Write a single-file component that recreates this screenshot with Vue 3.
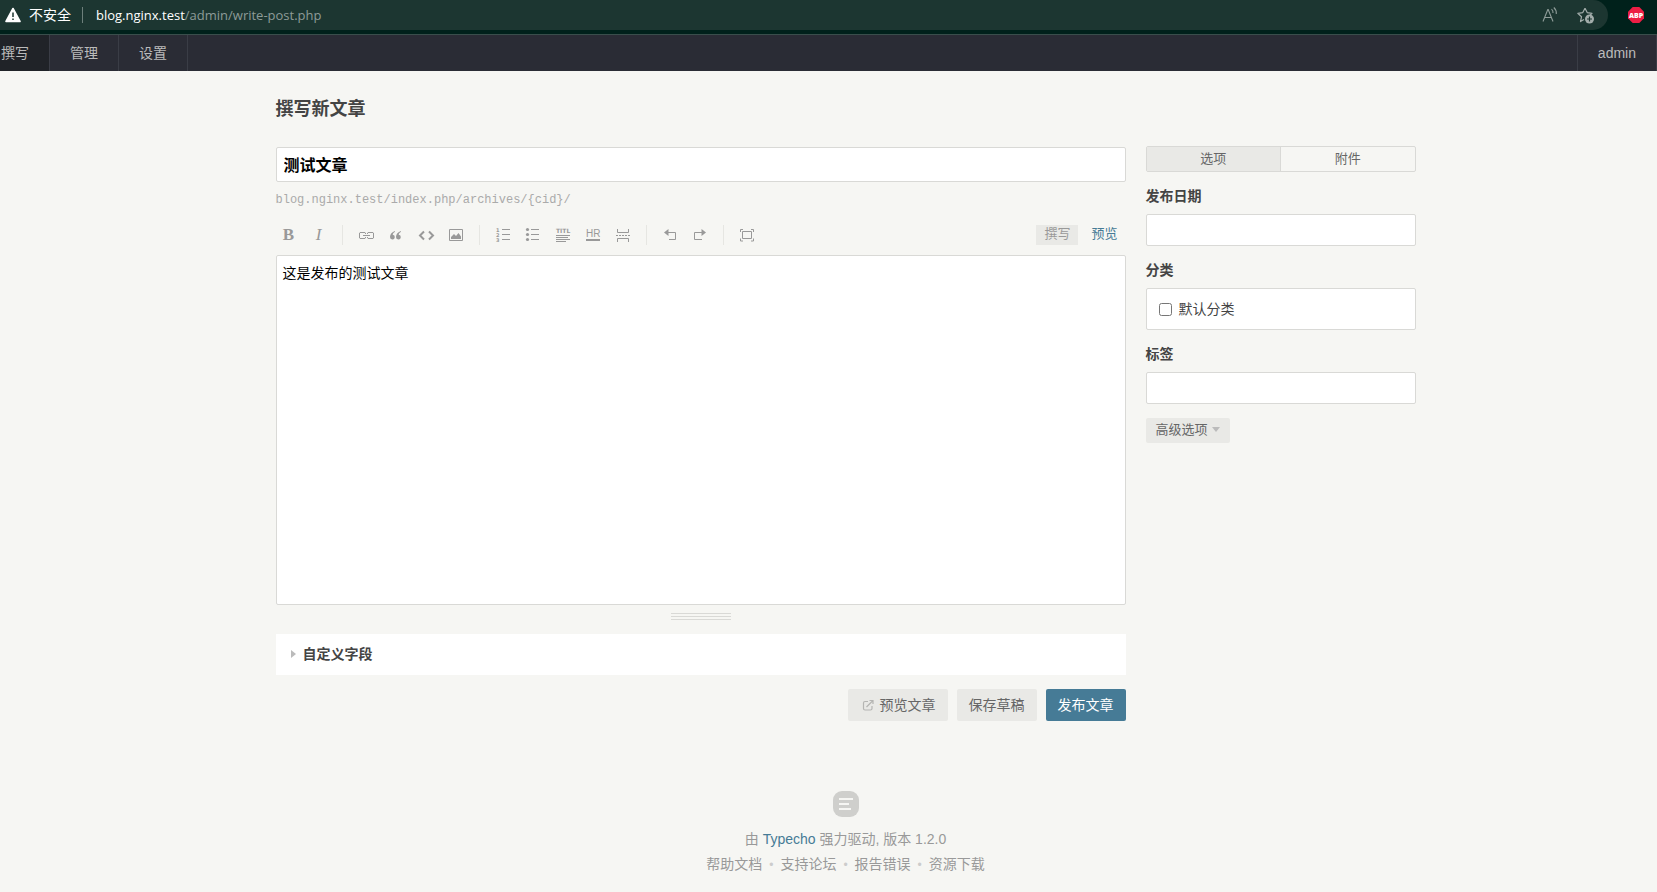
<script setup>
import { ref } from 'vue'

const title = ref('测试文章')
const body = ref('这是发布的测试文章')
const date = ref('')
const tags = ref('')
const checked = ref(false)
const menu = ['撰写', '管理', '设置']
const links = ['帮助文档', '支持论坛', '报告错误', '资源下载']
</script>

<template>
  <div class="page">
    <div class="browser">
      <div class="address">
        <svg class="warn" width="16" height="16" viewBox="0 0 16 16" aria-hidden="true">
          <path d="M8 1.5 15 14.5H1Z" fill="#fff" stroke="#fff" stroke-width="1.6" stroke-linejoin="round" />
          <path d="M8 5.5v4.5M8 11.5v1.6" stroke="#1c3631" stroke-width="1.5" />
        </svg>
        <span class="insecure">不安全</span>
        <span class="bar-line"></span>
        <span class="url">blog.nginx.test<span class="path">/admin/write-post.php</span></span>
        <button class="tool" aria-label="朗读">
          <svg width="18" height="18" viewBox="0 0 18 18" fill="none" stroke="#8f9c99" stroke-width="1.1">
            <path d="M2 15.5 6.8 3.5h.4l4.8 12M3.8 11.5h6.4M10.5 3.2c1.2 1 1.7 2.3 1.5 3.8M12.8 1.5c2 1.8 2.8 3.8 2.5 6.5" />
          </svg>
        </button>
        <button class="tool" aria-label="收藏">
          <svg width="20" height="18" viewBox="0 0 20 18" fill="none">
            <path d="M9 2.2 11.2 6.6 16 7.3 14 9.2M8 13.5 4.5 15.6 5.5 10.8 1.8 7.3 6.8 6.6 9 2.2" stroke="#a3adab" stroke-width="1.2" stroke-linejoin="round" />
            <circle cx="13.5" cy="13" r="4.5" fill="#a3adab" />
            <path d="M13.5 10.5v5M11 13h5" stroke="#1c3631" stroke-width="1.2" />
          </svg>
        </button>
      </div>
      <button class="abp" aria-label="Adblock Plus">
        <svg width="16" height="16" viewBox="0 0 16 16">
          <path d="M4.7 0h6.600L16 4.700v6.600L11.300 16H4.700L0 11.300V4.700Z" fill="#ed1e45" />
          <text x="8" y="10.6" text-anchor="middle" font-family="Open Sans, sans-serif" font-weight="800" font-size="7" fill="#fff">ABP</text>
        </svg>
      </button>
    </div>

    <nav class="nav">
      <a v-for="(m, i) in menu" :key="m" href="#" :class="{ active: i === 0 }">{{ m }}</a>
      <a href="#" class="user">admin</a>
    </nav>

    <main class="container">
      <h2>撰写新文章</h2>
      <div class="cols">
        <section class="editor">
          <input v-model="title" class="title" type="text" aria-label="标题" />
          <p class="slug">blog.nginx.test/index.php/archives/{cid}/</p>
          <div class="toolbar">
            <button class="serif" aria-label="加粗"><b>B</b></button>
            <button class="serif" aria-label="斜体"><i>I</i></button>
            <span class="sep"></span>
            <button aria-label="链接">
              <svg viewBox="0 0 20 20" fill="none" stroke="#999"><path d="M9.5 9V8l-.5-.5H4l-.5.5v5l.5.5h5l.5-.5v-1M11.500 9V8l.5-.5h5l.5.5v5l-.5.5h-5l-.5-.5v-1M7 10.500h7" /></svg>
            </button>
            <button aria-label="引用">
              <svg viewBox="0 0 20 20" fill="#999"><path d="M9 6C6 7 4 9 4 12a2.4 2.4 0 1 0 2.7-2.3C6.8 8.5 7.6 7.5 9 6.7ZM15 6c-3 1-5 3-5 6a2.4 2.4 0 1 0 2.7-2.3C12.8 8.5 13.6 7.5 15 6.7Z" /></svg>
            </button>
            <button aria-label="代码">
              <svg viewBox="0 0 20 20" fill="none" stroke="#999" stroke-width="2"><path d="M8 6.5 4 10.5l4 4M13 6.5l4 4-4 4" /></svg>
            </button>
            <button aria-label="图片">
              <svg viewBox="0 0 20 20"><path d="M3.5 4.5h13v11h-13z" fill="none" stroke="#999" /><path d="M5 14v-2l3-3 2 2 2.5-3L15 11.5V14Z" fill="#999" /></svg>
            </button>
            <span class="sep"></span>
            <button aria-label="数字列表">
              <svg viewBox="0 0 20 20" fill="#999"><path d="M9 4h8v1H9zM9 9h8v1H9zM9 14h8v1H9z" /><g font-family="DejaVu Sans, sans-serif" font-weight="700" font-size="5"><text x="3" y="7">1</text><text x="3" y="12">2</text><text x="3" y="17">3</text></g></svg>
            </button>
            <button aria-label="普通列表">
              <svg viewBox="0 0 20 20" fill="#999"><path d="M8 4h8v1H8zM8 9h8v1H8zM8 14h8v1H8z" /><circle cx="4.5" cy="4.5" r="1.6" /><circle cx="4.5" cy="9.5" r="1.6" /><circle cx="4.5" cy="14.5" r="1.6" /></svg>
            </button>
            <button aria-label="标题">
              <svg viewBox="0 0 20 20" fill="#999"><text x="3" y="7.500" font-family="DejaVu Sans, sans-serif" font-weight="700" font-size="6">TITL</text><path d="M3 10h14v1H3zM3 12h12v1H3zM3 14h14v1H3zM3 16h10v1H3z" /></svg>
            </button>
            <button aria-label="分割线">
              <svg viewBox="0 0 20 20" fill="#999"><text x="3" y="12" font-family="Liberation Sans, sans-serif" font-size="10">HR</text><path d="M3 14h14v2H3z" /></svg>
            </button>
            <button aria-label="摘要分割线">
              <svg viewBox="0 0 20 20" fill="none" stroke="#999"><path d="M4.5 4v3.5h11V4M4.5 17v-3.5h11V17" /><path d="M3 10.5h14" stroke-dasharray="2 1" /></svg>
            </button>
            <span class="sep"></span>
            <button aria-label="撤销">
              <svg viewBox="0 0 20 20"><path d="M7 7.5h8.5v7H9" fill="none" stroke="#999" /><path d="M4 7.5 8.5 4v7Z" fill="#999" /></svg>
            </button>
            <button aria-label="重做">
              <svg viewBox="0 0 20 20"><path d="M13 7.5H4.5v7h7.5" fill="none" stroke="#999" /><path d="M16 7.5 11.5 4v7Z" fill="#999" /></svg>
            </button>
            <span class="sep"></span>
            <button aria-label="全屏">
              <svg viewBox="0 0 20 20" fill="none" stroke="#999"><path d="M5.5 6.5h9v7h-9zM3.5 7V4.5H6M14 4.5h2.5V7M16.5 13.5V16H14M6 16H3.5v-2.5" /></svg>
            </button>
            <span class="modes"><a href="#" class="on">撰写</a><a href="#">预览</a></span>
          </div>
          <textarea v-model="body" aria-label="文章内容"></textarea>
          <div class="grip"><i></i><i></i><i></i></div>
          <button class="fields"><span class="tri"></span>自定义字段</button>
          <div class="actions">
            <button class="btn">
              <svg width="16" height="16" viewBox="0 0 16 16" fill="none" stroke="#b5b5b3" stroke-width="1.2"><path d="M8 4.5H5A1.5 1.5 0 0 0 3.5 6v5.5A1.5 1.5 0 0 0 5 13h5.5a1.5 1.5 0 0 0 1.5-1.5V9M6.500 10l6-6M9.500 3.500H13V7" /></svg>
              预览文章
            </button>
            <button class="btn">保存草稿</button>
            <button class="btn primary">发布文章</button>
          </div>
        </section>

        <aside>
          <div class="tabs"><button class="on">选项</button><button>附件</button></div>
          <label class="head" for="date">发布日期</label>
          <input id="date" v-model="date" class="field" type="text" />
          <span class="head">分类</span>
          <div class="box">
            <input id="cat" v-model="checked" type="checkbox" /><label for="cat">默认分类</label>
          </div>
          <label class="head" for="tags">标签</label>
          <input id="tags" v-model="tags" class="field" type="text" />
          <button class="more">高级选项<span class="caret"></span></button>
        </aside>
      </div>

      <footer>
        <svg width="26" height="26" viewBox="0 0 26 26" aria-hidden="true">
          <rect width="26" height="26" rx="9" fill="#cfcfcc" />
          <path d="M6 7h14v2H6zM6 12h10v2H6zM6 17h12v2H6z" fill="#f6f6f3" />
        </svg>
        <p>由 <a href="#" class="brand">Typecho</a> 强力驱动, 版本 1.2.0</p>
        <p>
          <template v-for="(l, i) in links" :key="l"><span v-if="i" class="dot">•</span><a href="#">{{ l }}</a></template>
        </p>
      </footer>
    </main>
  </div>
</template>

<style>
body {
  background: #f6f6f3;
}
</style>

<style scoped>
.page {
  font-family: "Liberation Sans", "Noto Sans CJK SC", sans-serif;
  font-size: 14px;
  line-height: 20px;
  color: #444;
}
.page * { box-sizing: border-box; }
a { color: inherit; text-decoration: none; }
button {
  font: inherit;
  color: inherit;
  background: none;
  border: 0;
  padding: 0;
  margin: 0;
}
input, textarea { font: inherit; margin: 0; outline: 0; }
.browser {
  display: flex;
  height: 35px;
  padding-right: 13px;
  background: #00211b;
  border-bottom: 1px solid #394e4b;
  font-family: "Open Sans", "Noto Sans CJK SC", sans-serif;
}
.address {
  flex: 1;
  display: flex;
  align-items: center;
  height: 30px;
  padding: 0 12px 0 5px;
  background: #1c3631;
  border-radius: 0 15px 15px 0;
}
.insecure { margin-left: 8px; color: #fff; }
.bar-line { width: 1px; height: 16px; margin: 0 13px 0 11px; background: #6d7f7b; }
.url { flex: 1; color: #fff; font-size: 13px; }
.path { color: #8d9b98; }
.tool { display: flex; margin-left: 17px; }
.abp { display: flex; align-items: center; height: 30px; margin-left: 20px; }
.nav {
  display: flex;
  height: 36px;
  background: #2a2c35;
  line-height: 36px;
  color: #bbb;
}
.nav a { padding: 0 20px; border-right: 1px solid #3a3d46; }
.nav .active { padding-left: 1px; background: #202328; }
.nav .user { margin-left: auto; border-left: 1px solid #3a3d46; }
.container {
  max-width: 1160px;
  margin: 0 auto;
  padding: 25px 10px 0;
}
@media (min-width: 1240px) {
  .container { margin-left: calc(50% - 563px); }
}
h2 { margin: 0 0 24px; font-size: 18px; line-height: 26px; }
.cols { display: flex; gap: 20px; }
.editor { flex: 1; min-width: 0; padding-top: 1px; }
aside { width: 270px; }
.title, textarea, .field, .box {
  display: block;
  width: 100%;
  background: #fff;
  border: 1px solid #d9d9d6;
  border-radius: 2px;
}
.title {
  height: 35px;
  padding: 0 7px 2px;
  font-size: 16px;
  font-weight: 700;
  color: #000;
}
.slug {
  margin: 8px 0 15px;
  font-family: "Liberation Mono", monospace;
  font-size: 12px;
  color: #aaa;
}
.toolbar { display: flex; gap: 10px; height: 20px; padding-left: 3px; margin-bottom: 10px; }
.toolbar button { width: 20px; height: 20px; }
.toolbar svg { display: block; width: 20px; height: 20px; }
.toolbar .serif { font-family: "Liberation Serif", serif; font-size: 17px; color: #999; }
.sep { width: 1px; margin: 0 3px; background: #e6e6e2; }
.modes { display: flex; gap: 5px; margin-left: auto; font-size: 13px; color: #467b96; }
.modes a { padding: 0 8px; line-height: 18px; }
.modes .on { background: #e9e9e6; color: #999; }
textarea {
  height: 350px;
  padding: 7px 6px;
  color: #000;
  resize: none;
}
.grip { display: flex; flex-direction: column; gap: 2px; width: 60px; margin: 8px auto 14px; }
.grip i { height: 1px; background: #d9d9d6; }
.fields {
  display: flex;
  align-items: center;
  width: 100%;
  height: 41px;
  padding: 0 15px 2px;
  background: #fff;
  font-weight: 700;
}
.tri {
  margin-right: 7px;
  border: solid transparent;
  border-width: 4px 0 4px 5px;
  border-left-color: #bbb;
}
.actions { display: flex; justify-content: flex-end; gap: 9px; margin-top: 14px; }
.btn {
  display: flex;
  align-items: center;
  height: 32px;
  padding: 0 12px;
  background: #e9e9e6;
  border-radius: 2px;
  color: #666;
}
.btn svg { margin-right: 4px; }
.primary { background: #467b96; color: #fff; }
.tabs {
  display: flex;
  height: 26px;
  margin-bottom: 14px;
  border: 1px solid #d9d9d6;
  border-radius: 2px;
  font-size: 13px;
  color: #666;
}
.tabs button { flex: 1; }
.tabs .on { background: #e9e9e6; border-right: 1px solid #d9d9d6; }
.head { display: block; margin-bottom: 8px; font-weight: 700; }
.field { height: 32px; margin-bottom: 14px; padding: 0 7px; }
.box { display: flex; align-items: center; height: 42px; margin-bottom: 14px; padding: 0 12px; }
.box input { width: 13px; height: 13px; margin-right: 7px; }
.more {
  display: flex;
  align-items: center;
  height: 25px;
  padding: 0 10px 2px;
  background: #e9e9e6;
  border-radius: 2px;
  font-size: 13px;
  color: #666;
}
.caret {
  margin-left: 4px;
  border: solid transparent;
  border-width: 5px 4px 0;
  border-top-color: #bbb;
}
footer { margin-top: 70px; text-align: center; color: #999; }
footer svg { display: block; margin: 0 auto 10px; }
footer p { margin: 0; line-height: 25px; }
.brand { color: #467b96; }
.dot { margin: 0 7px; color: #ccc; font-size: 12px; }
</style>
